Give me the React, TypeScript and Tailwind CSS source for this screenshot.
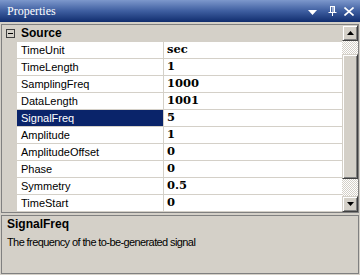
import React from "react";

const rows: [string, string][] = [
  ["TimeUnit", "sec"],
  ["TimeLength", "1"],
  ["SamplingFreq", "1000"],
  ["DataLength", "1001"],
  ["SignalFreq", "5"],
  ["Amplitude", "1"],
  ["AmplitudeOffset", "0"],
  ["Phase", "0"],
  ["Symmetry", "0.5"],
  ["TimeStart", "0"],
];

const btn =
  "bg-[#d4d0c8] border border-t-[#d4d0c8] border-l-[#d4d0c8] border-r-[#404040] border-b-[#404040] shadow-[inset_1px_1px_#ffffff,inset_-1px_-1px_#808080]";

export default function App() {
  return (
    <div className="w-[360px] h-[275px] bg-[#d4d0c8] flex flex-col overflow-hidden">
      {/* title bar */}
      <div className="h-[22px] flex items-center bg-[linear-gradient(to_bottom,#7d98cc,#3e5ea0_50%,#102d6e)] text-white">
        <span className="pl-[7px] text-[12px] leading-none [font-family:'Liberation_Serif',serif]">Properties</span>
        <div className="flex-1" />
        <svg width="9" height="5" viewBox="0 0 9 5" className="mr-[11px] mt-[2px]">
          <path d="M0 0H9L4.5 5Z" fill="#fff" />
        </svg>
        <svg width="9" height="10" viewBox="0 0 9 10" className="mr-[7px]">
          <path d="M2 0.5H7M2.5 0.5V6M6.5 0.5V6M5 0.5V6M0.5 6.5H8.5M4.5 6.5V10" stroke="#fff" strokeWidth="1" fill="none" />
        </svg>
        <svg width="10" height="9" viewBox="0 0 10 9" className="mr-[6px]">
          <path d="M0.5 0.5L9.5 8.5M9.5 0.5L0.5 8.5" stroke="#fff" strokeWidth="1.6" fill="none" />
        </svg>
      </div>
      <div className="h-[2px]" />
      {/* grid */}
      <div className="mx-[1px] h-[189px] border border-[#808080] flex">
        <div className="flex-1 flex flex-col bg-[#d4d0c8]">
          <div className="h-[17px] flex items-center border-b border-[#d4d0c8]">
            <div className="w-[15px] flex justify-center pl-[2px]">
              <svg width="9" height="9" viewBox="0 0 9 9">
                <rect x="0.5" y="0.5" width="8" height="8" fill="#d4d0c8" stroke="#404040" />
                <path d="M2 4.5H7" stroke="#000" />
              </svg>
            </div>
            <span className="pl-[4px] text-[12px] font-bold text-black [font-family:'Liberation_Sans',sans-serif]">Source</span>
          </div>
          {rows.map(([n, v]) => {
            const sel = n === "SignalFreq";
            return (
              <div key={n} className="h-[17px] flex">
                <div className="w-[15px] bg-[#d4d0c8]" />
                <div
                  className={`w-[146px] flex items-center pl-[4px] text-[11px] border-b border-[#d4d0c8] [font-family:'Liberation_Sans',sans-serif] ${
                    sel ? "bg-[#0a246a] text-white" : "bg-white text-black"
                  }`}
                >
                  {n}
                </div>
                <div className="w-[1px] bg-[#d4d0c8]" />
                <div className="flex-1 flex items-center pl-[3px] bg-white border-b border-[#d4d0c8] text-[11.5px] font-bold text-black [font-family:'DejaVu_Serif',serif]">
                  {v}
                </div>
              </div>
            );
          })}
        </div>
        {/* scrollbar */}
        <div className="w-[16px] flex flex-col bg-[repeating-conic-gradient(#d4d0c8_0_25%,#ffffff_0_50%)] bg-[length:2px_2px]">
          <div className={`h-[16px] flex items-center justify-center ${btn}`}>
            <svg width="7" height="4" viewBox="0 0 7 4">
              <path d="M0 4H7L3.5 0Z" fill="#000" />
            </svg>
          </div>
          <div className="h-[13px]" />
          <div className={`h-[125px] ${btn}`} />
          <div className="flex-1" />
          <div className={`h-[16px] flex items-center justify-center ${btn}`}>
            <svg width="7" height="4" viewBox="0 0 7 4">
              <path d="M0 0H7L3.5 4Z" fill="#000" />
            </svg>
          </div>
        </div>
      </div>
      <div className="h-[2px]" />
      {/* description */}
      <div className="mx-[1px] h-[59px] border border-[#808080] px-[5px] pt-[1px] text-black [font-family:'Liberation_Sans',sans-serif]">
        <div className="text-[12px] font-bold leading-[15px]">SignalFreq</div>
        <div className="text-[11px] tracking-[-0.6px] leading-[15px] mt-[3px]">The frequency of the to-be-generated signal</div>
      </div>
    </div>
  );
}
